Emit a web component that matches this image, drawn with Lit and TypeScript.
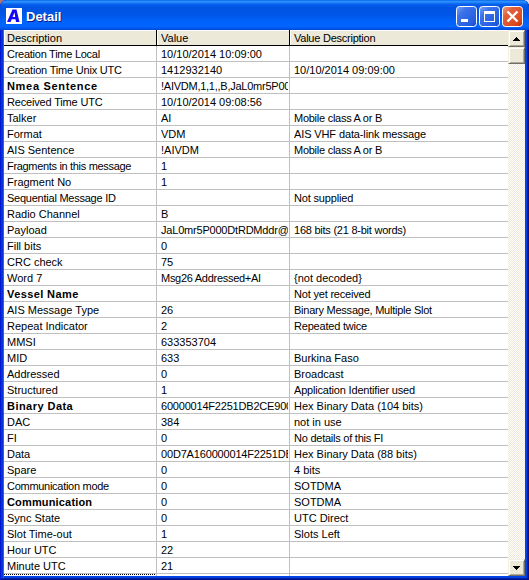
import { LitElement, html, css, svg } from "lit";
import { customElement } from "lit/decorators.js";
import { classMap } from "lit/directives/class-map.js";
import { styleMap } from "lit/directives/style-map.js";

type Row = [string, string, string, boolean?];

const ROWS: Row[] = [
  ["Creation Time Local", "10/10/2014 10:09:00", ""],
  ["Creation Time Unix UTC", "1412932140", "10/10/2014 09:09:00"],
  ["Nmea Sentence", "!AIVDM,1,1,,B,JaL0mr5P00", "", true],
  ["Received Time UTC", "10/10/2014 09:08:56", ""],
  ["Talker", "AI", "Mobile class A or B"],
  ["Format", "VDM", "AIS VHF data-link message"],
  ["AIS Sentence", "!AIVDM", "Mobile class A or B"],
  ["Fragments in this message", "1", ""],
  ["Fragment No", "1", ""],
  ["Sequential Message ID", "", "Not supplied"],
  ["Radio Channel", "B", ""],
  ["Payload", "JaL0mr5P000DtRDMddr@", "168 bits (21 8-bit words)"],
  ["Fill bits", "0", ""],
  ["CRC check", "75", ""],
  ["Word 7", "Msg26 Addressed+AI", "{not decoded}"],
  ["Vessel Name", "", "Not yet received", true],
  ["AIS Message Type", "26", "Binary Message, Multiple Slot"],
  ["Repeat Indicator", "2", "Repeated twice"],
  ["MMSI", "633353704", ""],
  ["MID", "633", "Burkina Faso"],
  ["Addressed", "0", "Broadcast"],
  ["Structured", "1", "Application Identifier used"],
  ["Binary Data", "60000014F2251DB2CE900", "Hex Binary Data (104 bits)", true],
  ["DAC", "384", "not in use"],
  ["FI", "0", "No details of this FI"],
  ["Data", "00D7A160000014F2251DB", "Hex Binary Data (88 bits)"],
  ["Spare", "0", "4 bits"],
  ["Communication mode", "0", "SOTDMA"],
  ["Communication", "0", "SOTDMA", true],
  ["Sync State", "0", "UTC Direct"],
  ["Slot Time-out", "1", "Slots Left"],
  ["Hour UTC", "22", ""],
  ["Minute UTC", "21", ""],
];

/* Letter spacing in px for labels that differ from the column's default. */
const TRACKING: Record<string, number> = {
  "Creation Time Local": -0.26,
  "Creation Time Unix UTC": -0.2,
  "Nmea Sentence": 0.68,
  "Vessel Name": 0.4,
  "Binary Data": 0.46,
  "Communication": 0.16,
  "Received Time UTC": -0.17,
  "Fragments in this message": -0.32,
  "Sequential Message ID": -0.24,
  "Communication mode": -0.28,
  "Value Description": -0.24,
  "Mobile class A or B": -0.26,
  "AIS VHF data-link message": -0.12,
  "168 bits (21 8-bit words)": -0.24,
  "Binary Message, Multiple Slot": -0.24,
  "Application Identifier used": -0.19,
  "No details of this FI": -0.24,
  "Not supplied": -0.17,
  "Not yet received": -0.19,
  "Repeated twice": -0.2,
  "!AIVDM,1,1,,B,JaL0mr5P00": -0.25,
  "JaL0mr5P000DtRDMddr@": -0.2,
  "Msg26 Addressed+AI": -0.28,
  "60000014F2251DB2CE900": -0.2,
  "00D7A160000014F2251DB": -0.17,
};

@customElement("app-root")
export class AppRoot extends LitElement {
  static styles = css`
    :host {
      display: block;
      width: 529px;
      height: 580px;
      overflow: hidden;
      background: linear-gradient(90deg, #b5766f 50%, #d8dce8 50%);
      font: 11px/15px "Liberation Sans", Arial, sans-serif;
      color: #000;
    }
    * { box-sizing: border-box; }
    .window {
      display: flex;
      flex-direction: column;
      height: 580px;
      padding: 0 4px 4px;
      border-radius: 7px 7px 0 0;
      background: #0030d8;
      box-shadow: inset 1px 0 #0019cf, inset -1px -1px #00138c,
        inset 3px 0 #0831d9, inset -2px -2px #001ea0, inset 4px 0 #166aee,
        inset -4px -4px #0044e4;
      overflow: hidden;
    }
    .title {
      flex: none;
      display: flex;
      align-items: center;
      height: 30px;
      margin: 0 -4px;
      padding: 0 6px;
      background: linear-gradient(#0058e0 0, #2b90ff 1px, #2b90ff 2px, #0a62ee 4px,
        #0054e3 7px, #0055e5 14px, #0062fa 21px, #0066ff 26px, #005bf4 28px, #0043cf 30px);
    }
    .app-icon { width: 16px; height: 16px; margin-top: 2px; display: block; }
    .title h1 {
      flex: 1;
      margin: 4px 0 0 4px;
      font: bold 13px/16px "Liberation Sans", Arial, sans-serif;
      color: #fff;
      text-shadow: 1px 1px #0a1883;
    }
    .buttons { display: flex; gap: 2px; margin-top: 3px; }
    .buttons svg { display: block; width: 21px; height: 21px; }
    .body { flex: 1; min-height: 0; display: flex; background: #fff; }
    .grid { flex: 1; min-width: 0; display: flex; flex-direction: column; overflow: hidden; }
    .row {
      flex: none;
      display: grid;
      grid-template-columns: 153px 133px 1fr;
      height: 16px;
    }
    .cell {
      border-bottom: 1px solid #c0c0c0;
      border-right: 1px solid #c0c0c0;
      padding: 0 1px 0 3px;
      white-space: nowrap;
      min-width: 0;
    }
    .cell span { display: block; overflow: hidden; line-height: 16px; height: 15px; }
    .cell + .cell { padding-left: 4px; }
    .cell:last-child { border-right: 0; }
    .bold { font-weight: bold; }
    .head .cell {
      background: #ece9d8;
      border-color: #000;
      box-shadow: inset 1px 1px #fff;
    }
    .focus { height: 2px; }
    .focus .cell { border-bottom: 0; }
    .focus .cell:first-child {
      background: repeating-linear-gradient(90deg, #000 0 1px, #fff 1px 2px) 0 0 / 100% 1px no-repeat;
    }
    .scroll {
      flex: none;
      width: 17px;
      display: flex;
      flex-direction: column;
      background: repeating-conic-gradient(#ece9d8 0 25%, #fff 0 50%) 0 0 / 2px 2px;
    }
    .btn {
      flex: none;
      height: 17px;
      background: #ece9d8;
      border: 1px solid;
      border-color: #f1efe2 #716f64 #716f64 #f1efe2;
      box-shadow: inset 1px 1px #fff, inset -1px -1px #aca899;
      display: flex;
      align-items: center;
      justify-content: center;
    }
    .btn svg { display: block; width: 7px; height: 4px; }
    .down { margin-top: auto; }
  `;

  private button(kind: "min" | "max" | "close") {
    const red = kind === "close";
    const glyph =
      kind === "min"
        ? svg`<rect x="5" y="13" width="7" height="3" fill="#fff"/>`
        : kind === "max"
          ? svg`<path d="M5 5H16V16H5Z M6 8V15H15V8Z" fill="#fff" fill-rule="evenodd"/>`
          : svg`<path d="M5.5 5.5L15.5 15.5M15.5 5.5L5.5 15.5" stroke="#fff" stroke-width="2.3"/>`;
    return html`<svg viewBox="0 0 21 21">
      <defs>
        <linearGradient id=${"face-" + kind} x1="0" y1="0" x2="1" y2="1">
          <stop offset="0" stop-color=${red ? "#f0a088" : "#7aa5f5"} />
          <stop offset=".3" stop-color=${red ? "#e0603c" : "#3c72ea"} />
          <stop offset=".75" stop-color=${red ? "#dc4a20" : "#2560e0"} />
          <stop offset="1" stop-color=${red ? "#b83008" : "#1648c8"} />
        </linearGradient>
      </defs>
      <rect x=".5" y=".5" width="20" height="20" rx="3" fill=${`url(#face-${kind})`} stroke="#fff" />
      ${glyph}
    </svg>`;
  }

  private cells(values: string[], bold = false) {
    return values.map(
      (v, i) => html`<div class=${classMap({ cell: true, bold: bold && i === 0 })}>
        <span style=${styleMap({ letterSpacing: `${TRACKING[v] ?? 0}px` })}>${v}</span>
      </div>`,
    );
  }

  render() {
    return html`<div class="window">
      <div class="title">
        <svg class="app-icon" viewBox="0 0 16 16">
          <rect width="16" height="16" fill="#fff" />
          <path d="M1 14L6.5 1.5H10.5L13.5 14H10L9.5 11.3H5.7L4.6 14ZM6.6 9H9.2L8.5 4.5Z" fill="#1408f4" fill-rule="evenodd" />
        </svg>
        <h1>Detail</h1>
        <div class="buttons">${this.button("min")}${this.button("max")}${this.button("close")}</div>
      </div>
      <div class="body">
        <div class="grid">
          <div class="row head">${this.cells(["Description", "Value", "Value Description"])}</div>
          ${ROWS.map(([a, b, c, bold]) => html`<div class="row">${this.cells([a, b, c], bold)}</div>`)}
          <div class="row focus">${this.cells(["", "", ""])}</div>
        </div>
        <div class="scroll">
          <div class="btn"><svg viewBox="0 0 7 4"><path d="M3 0H4V1H5V2H6V3H7V4H0V3H1V2H2V1H3Z" /></svg></div>
          <div class="btn"></div>
          <div class="btn down"><svg viewBox="0 0 7 4"><path d="M0 0H7V1H6V2H5V3H4V4H3V3H2V2H1V1H0Z" /></svg></div>
        </div>
      </div>
    </div>`;
  }
}
